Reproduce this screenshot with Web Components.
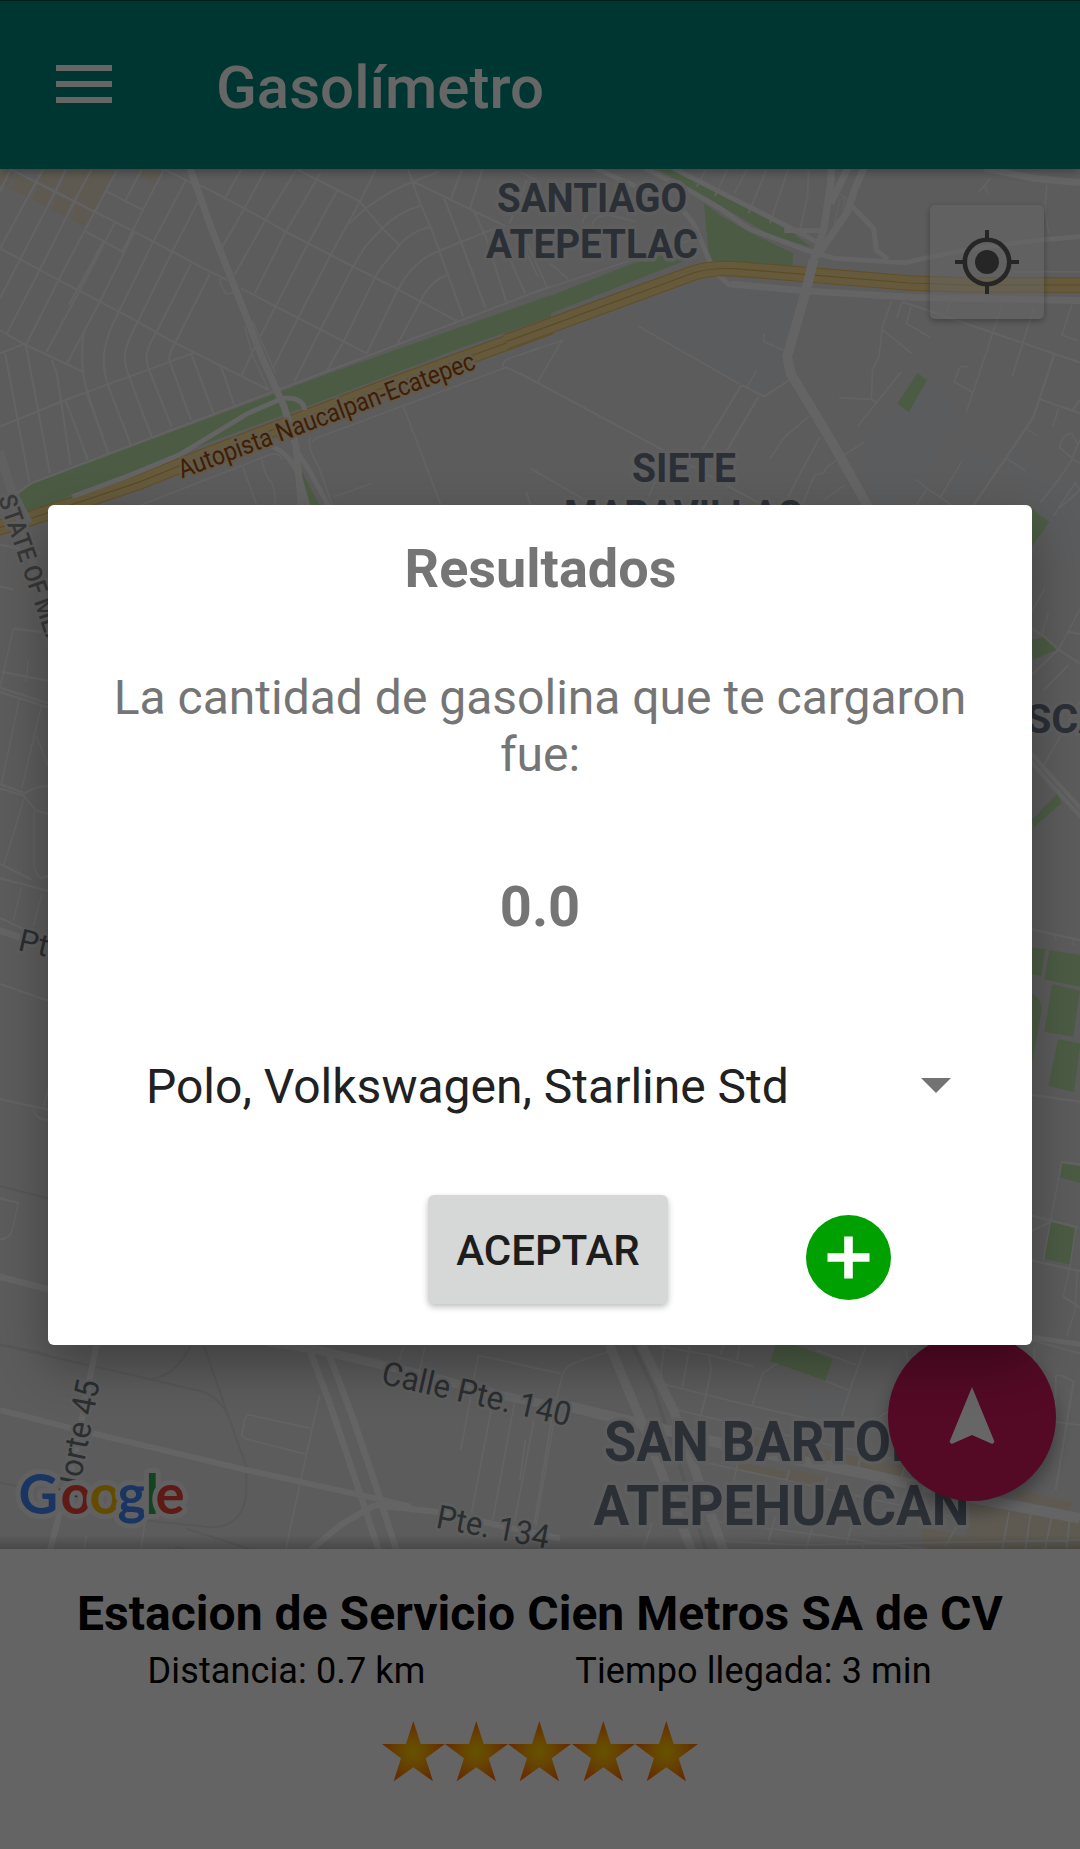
<!DOCTYPE html>
<html lang="es">
<head>
<meta charset="utf-8">
<title>Gasolímetro</title>
<style>
html,body{margin:0;padding:0}
body{width:1080px;height:1849px;overflow:hidden;font-family:Roboto,"Noto Sans",sans-serif;background:#fafafa}
</style>
</head>
<body>
<fuel-app></fuel-app>
<script>
const define=(name,html,setup)=>{
  const t=document.createElement('template');
  t.innerHTML=html;
  customElements.define(name,class extends HTMLElement{
    constructor(){
      super();
      this.attachShadow({mode:'open'}).appendChild(t.content.cloneNode(true));
    }
    connectedCallback(){ if(setup) setup(this,this.shadowRoot); }
  });
};

define('app-bar',`
<style>
:host{display:flex;align-items:flex-start;box-sizing:border-box;height:169px;background:#00877a;color:#fff;border-top:1px solid #004a42;padding-left:56px;box-shadow:0 2px 10px rgba(0,0,0,.35);z-index:2}
svg{display:block;margin-top:64px;width:56px;height:38px}
h1{margin:52px 0 0 104px;font-size:60px;line-height:70px;font-weight:500}
</style>
<svg viewBox="0 0 56 38" fill="#fff"><path d="M0 0h56v6H0zM0 16h56v6H0zM0 32h56v6H0z"/></svg>
<h1><slot></slot></h1>`);

define('locate-button',`
<style>
:host{display:block;width:114px;height:114px}
div{width:114px;height:114px;border-radius:5px;background:rgba(255,255,255,.48);box-shadow:0 2px 6px rgba(0,0,0,.3)}
svg{display:block}
</style>
<div><svg width="114" height="114" viewBox="0 0 114 114" fill="none" stroke="#606060" stroke-width="4"><circle cx="57" cy="57" r="22.2" stroke-width="4.6"/><path d="M57 25v10M57 79v10M25 57h10M79 57h10"/><circle cx="57" cy="57" r="12" fill="#606060" stroke="none"/></svg></div>`);

define('fab-button',`
<style>
:host{display:flex;align-items:center;justify-content:center;width:168px;height:168px;border-radius:50%;background:#d31a5c;box-shadow:0 10px 18px rgba(0,0,0,.35)}
</style>
<svg width="72" height="72" viewBox="0 0 24 24" fill="#fff"><path d="M12 2L4.5 20.29l.71.71L12 18l6.79 3 .71-.71z"/></svg>`);

define('city-map',`
<style>
:host{display:block;position:relative;height:1380px;overflow:hidden;background:#e6e6e6}
svg.map{display:block}
.pin{position:absolute}
.edge{position:absolute;left:0;right:0;bottom:0;height:14px;background:linear-gradient(to top,rgba(0,0,0,.22),transparent)}
.s{fill:none;stroke:#f7f7f7;stroke-width:6}
.t{stroke-width:4.5}
.m{fill:none;stroke:#fbfbfb;stroke-width:20}
.w{fill:none;stroke:#fbfbfb;stroke-width:30}
.g{fill:#bde6aa}.y{fill:#ece2cd}.b{fill:#e2e5ea}
.rail{fill:none;stroke:#d6d9d9;stroke-width:6}
.h1{fill:none;stroke:#efc465;stroke-width:47}
.h2{fill:none;stroke:#fde197;stroke-width:40}
.h3{fill:none;stroke:#e5b95b;stroke-width:3.5}
text{font-family:Roboto,"Noto Sans",sans-serif;paint-order:stroke;stroke:#ececec;stroke-width:7;stroke-linejoin:round}
.a{font-weight:700;fill:#6c7788}
.st{font-size:33px;fill:#6b7479;stroke-width:5}
.hw{font-size:26px;fill:#a04d0a;stroke:#f3e0b8;stroke-width:5}
.logo text{font-family:Lato,sans-serif;font-weight:700;font-size:54.5px;stroke:#f3f3f3;stroke-width:10}
</style>
<svg class="map" width="1080" height="1380" viewBox="0 169 1080 1380">
<g transform="translate(0 160) scale(.34439 .33333)">
  <path class="y" d="M0 30H45L22 82 0 70zM50 42L105 68 82 112 30 88zM125 30H185L160 88 108 62zM200 30H335L275 152 168 92zM112 74L155 98 133 142 90 118zM165 104L208 128 188 172 145 150zM220 132L270 160 245 200 202 176zM380 30H475L450 74z"/>
  <path class="g" d="M50 1000L90 972 780 708 960 638 1600 405V470L1330 567 890 740 600 850 220 1000 75 1065zM875 930L930 1040H885z"/>
  <path class="s" d="M0 12L50 38 160 95 275 155 390 215 500 275 610 335 660 360M700 385L1065 580M0 265L170 360 290 425 400 485 500 545 565 578 645 620 780 690M480 30L555 68 600 85 710 145 830 215 960 285 1150 385 1330 485M865 30L980 90 1045 125 1110 205 1160 255M0 510L75 555 240 635M0 580L75 550M0 800L190 720 375 650 565 578M50 1000L90 970 780 700 960 630 1330 485 1600 378"/>
  <path class="s" d="M30 30L0 95M125 30L105 65 0 265M190 30L160 95 0 415M265 30L215 125 115 330 20 520M340 30L275 155 170 360 75 555M335 185L230 395 135 575M390 215L290 425 195 610M245 510C235 560 235 640 255 700L315 880M540 60L445 245 345 455C290 560 295 620 315 680L380 855M575 125L500 275 400 485C355 570 355 600 375 650L440 830M555 310L455 515C420 570 420 600 435 635L498 800M610 340L510 545Q485 590 493 605L555 780M555 580L620 760M640 615L680 735M15 580L85 965M75 555L145 940M150 600L165 640 205 915M190 720L255 900M250 695L315 880M310 95L415 150 475 30M365 120L410 30M250 215L355 275 415 150M300 245L200 435"/>
  <path class="s" d="M700 30L650 120M770 30L710 145 640 270M860 30L770 180 700 310 680 345M930 40L830 215 740 400M980 90L895 250 800 440 755 530M1090 30L1045 125 960 285 865 475 795 620M1225 135Q1150 160 1110 205L1060 260 1025 320 930 510 855 665M1250 200Q1190 215 1160 255L1105 325 1090 350 1000 540 950 630M1450 200L1280 270Q1200 300 1155 390L1065 580M1300 345Q1250 360 1220 425L1155 550M740 560L700 650M1015 190Q1090 110 1200 65L1275 35M1185 30L1220 130 1250 200 1345 470M1200 65L1290 110 1370 150 1470 200M1290 115L1340 250 1410 445M1375 150L1410 230 1470 425M1460 250L1525 400M1310 115L1340 30M1365 145L1400 30M1480 190L1530 60"/>
  <path class="s t" d="M660 360Q635 345 640 370L655 402 690 395M710 500L735 590 780 690M725 480Q740 490 745 510L800 640M410 1035L780 885Q810 875 820 900M705 920L745 1035M760 900Q770 950 790 970 800 990 798 1035M905 850Q910 838 925 832L1470 622 1568 670M1460 622Q1460 600 1480 595L1568 562M1170 735L1280 1035M970 1010L1080 970M1540 925L1568 945M1527 995L1540 1035M900 830Q890 860 925 920L965 1035"/>
  <path class="h1" d="M-20 1108L75 1080 400 968 600 885 1100 688 1600 500"/>
  <path class="h2" d="M-20 1108L75 1080 400 968 600 885 1100 688 1600 500"/>
  <path class="h3" d="M-20 1108L75 1080 400 968 600 885 1100 688 1600 500"/>
  <path class="m" d="M550 20L612 200 700 430 760 590 825 740 860 860 875 1040"/>
  <path class="m" style="stroke-width:14" d="M210 1010L380 945 520 885 720 760 820 715Q880 710 885 750M790 860Q840 880 870 950L895 1040M855 860L900 935 955 1040"/>
  <path class="s" d="M0 890L30 980 85 1090" style="stroke-width:22;stroke:#f0f0f0"/>
</g>
<g transform="translate(520 160) scale(.35714 .33333)">
  <path class="b" d="M300 450L480 375 570 350 590 380 780 400 735 570 745 640 750 665 683 710 620 680 550 630zM1055 735L1140 660 1222 735 1120 1000 1020 1035 990 1000 945 900zM1230 890L1270 865 1330 900 1260 1010 1200 1010zM1370 875L1480 950 1450 1010 1390 980z"/>
  <path class="g" d="M-10 448L320 308 440 262 480 295 -10 500zM515 130L560 165 640 215 765 280 763 325 530 305zM390 30H430L600 125 760 215 815 262 700 225 520 110zM1113 638L1140 660 1089 756 1056 732zM1430 1040L1470 1080H1430z"/>
  <path class="s t" d="M0 412L480 240M520 30L495 80M580 30L545 110M635 30L600 100M690 30L640 160M750 30L700 190M808 30L805 110 785 205M0 235L50 350M20 250L75 380M85 310L135 357M175 190Q180 150 230 160L325 185M200 210Q200 165 250 165M0 585L118 541 50 665M333 500L615 672M683 520V545L740 572M636 680L662 632M1040 425L1015 500 1005 590 987 630 984 720M1015 510L1097 580M1070 425L1055 475M1095 440L1082 490 1150 533M1067 636L945 800M893 714L984 718 998 728M1350 435L1250 755M1205 425L1195 460M1440 440L1378 650M1545 435L1517 525 1560 542M1252 622Q1230 610 1225 640L1215 665 1265 695M810 768L740 832 700 895M840 830L765 980 740 1035M965 845L860 920 850 940 825 945 790 1035M910 975L850 1020M1108 958L1140 985 1110 1035M1175 1015L1240 900M1362 895L1415 932M1420 808L1445 825M1568 840L1545 895 1510 860Q1520 820 1545 820L1560 850M1545 900L1460 1035M1545 895L1568 910M1485 1065L1550 970 1568 985 1520 1075M30 925L205 1035M18 995L30 1035M360 1010L405 900M1140 985L1210 1035M1508 745L1492 800M0 35L55 65M1318 55L1285 95M1300 75L1310 100M1475 75L1470 140 1480 220M1380 335H1568M700 0L740 20"/>
  <path class="s" d="M0 640L400 870 620 1000 680 1035M620 675L510 870M668 710L580 870M620 675L683 710 755 660M1070 425L1568 608M1497 580L1455 715 1438 770 1360 895 1270 1035M1457 718L1568 760M1568 720L1545 755"/>
  <path class="m" style="stroke-width:14" d="M350 25L480 95 560 145 640 205 800 270 880 295 1080 308Q1300 250 1568 230M930 140L990 205 998 270 1030 298M430 25L760 205 830 245M740 212H850M200 20L400 115Q470 155 490 200L530 300 555 345 590 378"/>
  <path class="m" d="M1300 25L1440 55 1568 68M590 372L800 393 1100 412 1568 422"/>
  <path class="s" d="M880 190L895 120 910 110 905 160zM890 100L930 125" style="stroke-width:3"/>
  <path class="h1" d="M-40 545L0 530 470 345Q520 322 600 326L1090 369 1250 375H1600"/>
  <path class="h2" d="M-40 545L0 530 470 345Q520 322 600 326L1090 369 1250 375H1600"/>
  <path class="h3" d="M-40 545L0 530 470 345Q520 322 600 326L1090 369 1250 375H1600"/>
  <path class="w" style="stroke-width:27" d="M822 300L800 395 748 590 758 640 870 840 980 1050"/>
  <path class="m" d="M872 20L870 70 850 210 822 300M965 20L940 80 915 160 830 290M920 20L870 130"/>
</g>
<g transform="translate(0 480) scale(.33333 .56122)">
  <path class="s" d="M0 115L120 130M0 190L40 195M40 265L0 370M40 265L145 272M5 342L145 358M78 360L85 322M0 370L145 398M0 378L145 405M58 390L5 540M125 400L65 550M108 455L145 510M0 542L75 558Q110 545 145 545M0 550L70 562 110 590 145 594M75 562L12 685M102 590V685Q105 705 125 710L145 705M0 684L95 712M0 710L145 732M65 725L40 785M125 740L100 795M0 780L70 800M0 898L145 928M0 1103L145 1122M130 1118L145 1085M100 1120Q105 1140 145 1140M0 1280L55 1288 35 1340Q20 1355 0 1352" style="stroke-width:4"/>
  <path class="m" style="stroke-width:12" d="M0 803L60 815M0 1420L145 1442"/>
  <path class="rail" style="stroke-width:4" d="M0 1258L145 1280M0 1540L145 1558"/>
  <path class="m" style="stroke-width:24;stroke:#f0f0f0" d="M0 -50L50 50 160 270"/>
</g>
<g transform="translate(1020 480) scale(.33333 .56122)">
  <path class="b" d="M30 10L180 0V150L120 130 85 90z"/>
  <path class="g" d="M30 50L88 75 36 118zM30 285L70 280 112 302 40 320zM110 560L125 575 40 620 36 605zM30 832L76 836 64 884 30 880zM88 838L182 846V903L73 890zM96 898L180 910 160 992 73 983zM30 915Q65 920 65 945L36 1040zM114 996L182 1004 162 1091 85 1080zM126 1218L182 1222V1253L120 1243zM90 1322L168 1330 150 1398 73 1388z"/>
  <path class="s" style="stroke-width:4" d="M62 40L115 0M100 65L165 5 180 18 120 50M180 230L145 270 115 302 75 280 30 262M75 192L30 240M85 238L65 275M115 302L182 328M145 270L182 275M115 302L30 350M145 330L70 375M180 395L60 520M30 800L182 820M100 808L110 820M160 815V830M30 1095L182 1108M182 1220L125 1215 70 1390M30 1310L175 1332M168 1330L150 1400 130 1455 182 1475M30 1390L182 1410M30 1340L90 1322M172 1410L165 1480 140 1525"/>
  <path class="m" style="stroke-width:9" d="M30 485L90 525 182 585M30 500L90 540 182 600M40 1528L182 1540"/>
</g>
<g transform="translate(0 1320) scale(.35714 .33333)">
  <path class="rail" d="M0 75L420 178 570 215Q620 240 640 290L690 440V500Q690 620 590 622L400 600M420 178Q490 170 535 75M570 75L640 290M520 625L700 688M490 680L560 700M0 488L60 500"/>
  <path class="m" style="stroke-width:17" d="M0 270L200 325 690 450 1050 535 1150 560M270 75L210 400 140 690"/>
  <path class="m" style="stroke-width:26" d="M750 65L890 90 1130 150 1400 225 1568 262"/>
  <path class="m" style="stroke-width:18" d="M865 85L920 240 980 430 1060 690M915 85L990 300 1050 490 1110 690M1050 555L960 610 870 690M1050 555L1220 575 1568 655"/>
  <path class="s t" d="M895 225L840 490 800 688M700 285L870 325M700 285Q688 285 685 300L677 345Q677 352 690 357L855 402M1130 80L1110 150M1190 80L1175 150M1335 105L1568 160M1340 103L1290 390M1375 270L1320 580M1440 250L1380 600M1495 300L1440 610M1550 310L1500 620M242 648L235 688M405 610L395 688"/>
</g>
<g transform="translate(520 1320) scale(.35714 .33333)">
  <path class="b" d="M790 200L900 240 900 310 810 290z"/>
  <path class="g" d="M715 75H770L876 118 855 183 702 124z"/>
  <path class="y" d="M650 345L1080 440 1065 478 860 430 640 385zM610 425L750 455 740 480 605 450zM755 445L855 470 840 515 745 490zM1160 520L1360 570 1568 600V688H1130L1125 620 1250 650 1260 580zM1390 510L1545 545 1540 572 1385 540z"/>
  <path class="s" d="M395 190L580 240 780 290 930 320M440 270L640 320 1080 425M530 430L700 470 1250 600M405 80L395 150 400 190M475 80L455 200M395 80L530 105 535 150 520 230 470 430M530 105L655 140M570 75L560 105M615 75L608 120M830 90L940 135M720 130L680 160 650 255M855 183L918 210M968 80L930 190 900 290M0 135L115 160M255 92L150 130Q120 145 115 180L90 290 40 610M0 480L15 360M520 600L1568 750M570 663L780 675 1568 660M715 590L695 665M825 600L800 688M930 610L915 670M960 675V688M1190 680L1250 570M1370 575L1350 688M1430 580L1415 688M1490 585L1470 688M1540 590L1530 688M610 430L595 500M755 450L740 500M860 470L850 520M880 380L870 430M955 400L945 450M1080 430L1060 500M1300 280L1568 315M1500 290L1500 170Q1500 160 1525 170L1550 185 1500 510M1568 100L1430 60M1440 85V160M1000 300Q1020 270 1060 270M370 610L345 688M1080 90L1090 150" style="stroke-width:5"/>
  <path class="m" d="M250 75L350 330 480 690M340 75L430 270 570 690" style="stroke-width:26"/>
  <path class="rail" d="M315 75L375 210 460 480 520 690" style="stroke-width:10"/>
  <path class="w" d="M140 260L350 315 640 390 960 460 1250 530 1568 595" style="stroke-width:32"/>
</g>
<g class="labels">
  <text class="a" font-size="41" x="497" y="212" textLength="190" lengthAdjust="spacingAndGlyphs">SANTIAGO</text>
  <text class="a" font-size="41" x="486" y="258.200" textLength="212" lengthAdjust="spacingAndGlyphs">ATEPETLAC</text>
  <text class="a" font-size="41" x="632" y="482" textLength="104" lengthAdjust="spacingAndGlyphs">SIETE</text>
  <text class="a" font-size="41" x="564" y="529" textLength="238" lengthAdjust="spacingAndGlyphs">MARAVILLAS</text>
  <text class="a" font-size="41" x="1026" y="732.500" textLength="80" lengthAdjust="spacingAndGlyphs">SCA</text>
  <text class="a" font-size="56" x="604" y="1460.700" textLength="350" lengthAdjust="spacingAndGlyphs">SAN BARTOLO</text>
  <text class="a" font-size="56" x="593.500" y="1525" textLength="376" lengthAdjust="spacingAndGlyphs">ATEPEHUACAN</text>
  <text class="hw" transform="translate(182 478.500) rotate(-20.500)" textLength="315" lengthAdjust="spacingAndGlyphs">Autopista Naucalpan-Ecatepec</text>
  <text class="st" style="font-size:25px;font-weight:500;fill:#8a8a8a" transform="translate(-2 498) rotate(71)" textLength="158" lengthAdjust="spacingAndGlyphs">STATE OF MEX</text>
  <text class="st" style="font-size:31px" transform="translate(17 950) rotate(13)">Pte. 152</text>
  <text class="st" transform="translate(380 1383.500) rotate(12.800)" textLength="193" lengthAdjust="spacingAndGlyphs">Calle Pte. 140</text>
  <text class="st" transform="translate(435 1527.500) rotate(10.800)" textLength="114" lengthAdjust="spacingAndGlyphs">Pte. 134</text>
  <text class="st" transform="translate(77 1500) rotate(-79)" textLength="120" lengthAdjust="spacingAndGlyphs">Norte 45</text>
</g>
<g class="logo" aria-label="Google">
  <text x="18.500 60.500 89.500 117.500 145.500 155.500" y="1514"><tspan fill="#4285f4">G</tspan><tspan fill="#ea4335">o</tspan><tspan fill="#fbbc05">o</tspan><tspan fill="#4285f4">g</tspan><tspan fill="#34a853">l</tspan><tspan fill="#ea4335">e</tspan></text>
</g>
</svg>
<div class="edge"></div>
<locate-button class="pin" style="left:930px;top:36px"></locate-button>
<fab-button class="pin" style="left:888px;top:1164px"></fab-button>`);

define('star-icon',`
<style>:host{display:block;width:63.200px;height:62px}svg{display:block}</style>
<svg width="63.200" height="62" viewBox="0 0 189.600 186"><defs><radialGradient id="g" gradientUnits="userSpaceOnUse" cx="94" cy="93" r="98"><stop offset="0" stop-color="#ffd000"/><stop offset=".45" stop-color="#ffa800"/><stop offset="1" stop-color="#ff6600"/></radialGradient></defs><path fill="url(#g)" d="M94 0L116 69H189L131 112 153 181 94 139 35 181 57 112 0 69H72z"/></svg>`);

define('star-rating',`
<style>:host{display:flex;justify-content:center}</style>`,
(el,root)=>{
  const n=+el.getAttribute('value')||0;
  for(let i=0;i<n;i++) root.appendChild(document.createElement('star-icon'));
});

define('station-panel',`
<style>
:host{display:block;height:300px;background:#fafafa;color:#000;text-align:center}
h2{margin:0;padding-top:36px;font-size:48px;line-height:57px;font-weight:700;white-space:nowrap;letter-spacing:.04px}
.row{display:flex;padding:8px 93px 0 53px;font-size:36px;line-height:42px;letter-spacing:.12px}
star-rating{margin-top:29px}
</style>
<h2><slot name="name"></slot></h2>
<div class="row"><slot name="distance"></slot><slot name="eta"></slot></div>
<star-rating value="5"></star-rating>`);

define('car-spinner',`
<style>
:host{display:flex;align-items:center;justify-content:space-between;padding:0 81px 0 98px;font-size:48px;line-height:57px;color:#212121}
i{width:0;height:0;border:15px solid transparent;border-top-color:#737373;border-bottom:0;margin-bottom:2px}
</style><slot></slot><i></i>`);

define('raised-button',`
<style>
button{display:block;width:240px;height:109px;border:0;border-radius:6px;padding:2px 0 0;background:#d6d7d7;color:#1d1d1d;font:500 42px/107px Roboto,sans-serif;box-shadow:0 3px 6px rgba(0,0,0,.25)}
:host{display:block}
</style><button><slot></slot></button>`);

define('add-button',`
<style>:host{display:block}svg{display:block}</style>
<svg width="85" height="85" viewBox="0 0 85 85"><circle cx="42.500" cy="42.500" r="42.500" fill="#00a000"/><path d="M42.500 21.500v42M21.500 42.500h42" stroke="#fff" stroke-width="8.600"/></svg>`);

define('result-dialog',`
<style>
:host{display:flex;flex-direction:column;box-sizing:border-box;width:984px;height:840px;padding-top:32px;border-radius:6px;background:#fff;color:#757575;text-align:center;box-shadow:0 20px 50px rgba(0,0,0,.32)}
h2{margin:0 0 0 1px;font-size:54px;line-height:63px;font-weight:700}
p{margin:69px 60px 0;font-size:48px;line-height:57px}
strong{margin-top:92px;font-size:56px;line-height:64px;font-weight:700}
car-spinner{margin-top:119px;text-align:left}
.actions{display:flex;align-items:flex-start;margin-top:80px;padding-left:380px;gap:137.500px}
add-button{margin-top:19.500px}
</style>
<h2><slot name="title"></slot></h2>
<p><slot name="message"></slot></p>
<strong><slot name="value"></slot></strong>
<car-spinner><slot name="car"></slot></car-spinner>
<div class="actions"><raised-button>ACEPTAR</raised-button><add-button></add-button></div>`);

define('modal-scrim',`
<style>:host{position:absolute;inset:0;z-index:5;display:flex;align-items:center;justify-content:center;background:rgba(0,0,0,.6);padding-top:1px;box-sizing:border-box}</style><slot></slot>`);

define('fuel-app',`
<style>:host{display:flex;flex-direction:column;position:relative;width:1080px;height:1849px;overflow:hidden}
.cell{flex:1}</style>
<app-bar>Gasolímetro</app-bar>
<city-map></city-map>
<station-panel><span slot="name">Estacion de Servicio Cien Metros SA de CV</span><span slot="distance" class="cell">Distancia: 0.7 km</span><span slot="eta" class="cell">Tiempo llegada: 3 min</span></station-panel>
<modal-scrim>
<result-dialog><span slot="title">Resultados</span><span slot="message">La cantidad de gasolina que te cargaron fue:</span><span slot="value">0.0</span><span slot="car">Polo, Volkswagen, Starline Std</span></result-dialog>
</modal-scrim>`);
</script>
</body>
</html>
